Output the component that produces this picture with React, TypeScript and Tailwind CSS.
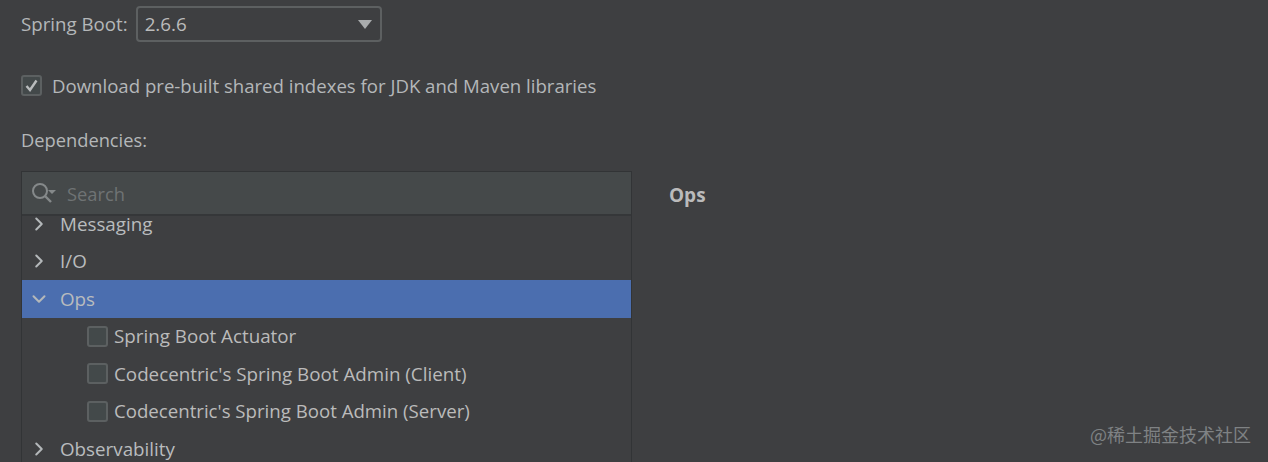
import React from 'react';
import { ChevronRight, ChevronDown } from 'lucide-react';

const font = "font-['Open_Sans',sans-serif]";

const Checkbox = ({ checked = false }: { checked?: boolean }) => (
  <span className="flex h-[21px] w-[21px] shrink-0 items-center justify-center rounded-[3px] border-2 border-[#5c6061] bg-[#43494a]">
    {checked && (
      <svg width="15" height="15" viewBox="0 0 15 15" fill="none">
        <path d="M2.5 8 L6 12 L12.5 2.5" stroke="#b9bcbd" strokeWidth="2.4" />
      </svg>
    )}
  </span>
);

const GroupRow = ({ label, open = false, selected = false, clip = false }: { label: string; open?: boolean; selected?: boolean; clip?: boolean }) => (
  <div className={`flex h-[37.5px] shrink-0 items-center ${selected ? 'bg-[#4b6eaf]' : ''} ${clip ? '-mt-[11px]' : ''}`}>
    <span className="flex w-[38px] shrink-0 justify-start pl-[6px]">
      {open ? (
        <ChevronDown size={22} strokeWidth={2.2} color="#b4b8ba" />
      ) : (
        <ChevronRight size={22} strokeWidth={2.2} color="#b4b8ba" />
      )}
    </span>
    <span className="text-[18.8px] leading-[24px] text-[#b9bcbe]">{label}</span>
  </div>
);

const DepRow = ({ label, size = 'text-[18.8px]' }: { label: string; size?: string }) => (
  <div className="flex h-[37.5px] shrink-0 items-center gap-[6px] pl-[65px]">
    <Checkbox />
    <span className={`${size} leading-[24px] text-[#bbbbbb]`}>{label}</span>
  </div>
);

export default function App() {
  return (
    <div className={`relative flex h-[462px] w-[1268px] flex-col overflow-hidden bg-[#3e3f41] pl-[21px] pt-[6px] ${font} text-[#b4b7b9]`}>
      {/* Spring Boot version */}
      <div className="flex items-center gap-[8px]">
        <span className="text-[18.7px]">Spring Boot:</span>
        <div className="flex h-[36px] w-[246px] items-center justify-between rounded-[4px] border-2 border-[#5d6061] pl-[7px] pr-[8px]">
          <span className="text-[18.8px] text-[#bbbbbb]">2.6.6</span>
          <span className="h-0 w-0 border-x-[7px] border-t-[9px] border-x-transparent border-t-[#a9acad]" />
        </div>
      </div>

      <div className="mt-[33px] flex h-[21px] items-center gap-[10px]">
        <Checkbox checked />
        <span className="text-[18.6px]">Download pre-built shared indexes for JDK and Maven libraries</span>
      </div>

      <div className="mt-[31px] text-[18.3px] leading-[26px]">Dependencies:</div>

      <div className="mt-[18px] flex flex-1 items-start">
        {/* Dependency tree */}
        <div className="flex h-[291px] w-[611px] shrink-0 flex-col overflow-hidden border-x border-t border-[#323436]">
          <div className="relative z-10 flex h-[44px] shrink-0 items-center border-b-2 border-[#353739] bg-[#45494a] pl-[8px]">
            <svg width="28" height="24" viewBox="0 0 28 24" fill="none">
              <circle cx="10" cy="10" r="7" stroke="#85898a" strokeWidth="2" />
              <path d="M15 15 L21 21" stroke="#85898a" strokeWidth="2.4" />
              <path d="M18 9 H26 L22 13 Z" fill="#85898a" />
            </svg>
            <span className="ml-[9px] pt-[2px] text-[18.3px] text-[#6f7374]">Search</span>
          </div>
          <GroupRow label="Messaging" clip />
          <GroupRow label="I/O" />
          <GroupRow label="Ops" open selected />
          <DepRow label="Spring Boot Actuator" />
          <DepRow label="Codecentric's Spring Boot Admin (Client)" />
          <DepRow label="Codecentric's Spring Boot Admin (Server)" size="text-[18.65px]" />
          <GroupRow label="Observability" />
        </div>

        {/* Details */}
        <div className="ml-[37px] pt-[10px] text-[19px] font-bold text-[#bbbbbb]">Ops</div>
      </div>

      <span className="absolute left-[1090px] top-[421px] font-['Noto_Sans_CJK_SC',sans-serif] text-[18px] text-[#7f8284]">@稀土掘金技术社区</span>
    </div>
  );
}
